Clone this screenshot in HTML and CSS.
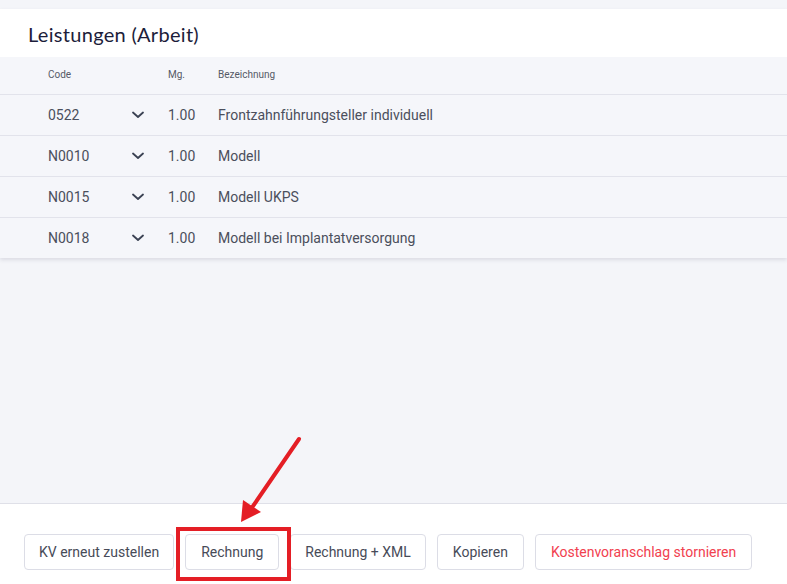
FILE: index.html
```html
<!DOCTYPE html>
<html lang="de">
<head>
<meta charset="utf-8">
<link rel="stylesheet" href="styles.css">
</head>
<body>
<div class="page">
  <section class="card">
    <h2 class="title">Leistungen (Arbeit)</h2>
    <div class="table">
      <div class="row head">
        <span class="c-code">Code</span>
        <span class="c-chev"></span>
        <span class="c-qty">Mg.</span>
        <span class="c-desc">Bezeichnung</span>
      </div>
      <div class="row">
        <span class="c-code">0522</span>
        <span class="c-chev"><svg width="12" height="8" viewBox="0 0 12 8"><path d="M1 1.5 L6 6 L11 1.5" fill="none" stroke="#3b4253" stroke-width="1.8" stroke-linecap="round" stroke-linejoin="round"/></svg></span>
        <span class="c-qty">1.00</span>
        <span class="c-desc">Frontzahnführungsteller individuell</span>
      </div>
      <div class="row">
        <span class="c-code">N0010</span>
        <span class="c-chev"><svg width="12" height="8" viewBox="0 0 12 8"><path d="M1 1.5 L6 6 L11 1.5" fill="none" stroke="#3b4253" stroke-width="1.8" stroke-linecap="round" stroke-linejoin="round"/></svg></span>
        <span class="c-qty">1.00</span>
        <span class="c-desc">Modell</span>
      </div>
      <div class="row">
        <span class="c-code">N0015</span>
        <span class="c-chev"><svg width="12" height="8" viewBox="0 0 12 8"><path d="M1 1.5 L6 6 L11 1.5" fill="none" stroke="#3b4253" stroke-width="1.8" stroke-linecap="round" stroke-linejoin="round"/></svg></span>
        <span class="c-qty">1.00</span>
        <span class="c-desc">Modell UKPS</span>
      </div>
      <div class="row">
        <span class="c-code">N0018</span>
        <span class="c-chev"><svg width="12" height="8" viewBox="0 0 12 8"><path d="M1 1.5 L6 6 L11 1.5" fill="none" stroke="#3b4253" stroke-width="1.8" stroke-linecap="round" stroke-linejoin="round"/></svg></span>
        <span class="c-qty">1.00</span>
        <span class="c-desc">Modell bei Implantatversorgung</span>
      </div>
    </div>
  </section>
  <div class="spacer"></div>
  <footer class="footer">
    <button class="btn btn-kv">KV erneut zustellen</button>
    <button class="btn">Rechnung</button>
    <button class="btn btn-xml">Rechnung + XML</button>
    <button class="btn">Kopieren</button>
    <button class="btn danger">Kostenvoranschlag stornieren</button>
  </footer>
</div>
<div class="mark-box"></div>
<svg class="mark-arrow" width="787" height="584" viewBox="0 0 787 584">
  <line x1="299" y1="439" x2="251" y2="509" stroke="#e41e25" stroke-width="4" stroke-linecap="round"/>
  <polygon points="241,522 243,500 261,512" fill="#e41e25"/>
</svg>
</body>
</html>
```

FILE: styles.css
```css
html, body {
  margin: 0;
  padding: 0;
}
body {
  background: #f4f5f9;
  font-family: Roboto, "Liberation Sans", sans-serif;
  width: 787px;
  height: 584px;
  overflow: hidden;
  position: relative;
}
.page {
  display: flex;
  flex-direction: column;
  height: 584px;
  padding-top: 9px;
  box-sizing: border-box;
}
.card {
  background: #f5f6fa;
  box-shadow: 0 2px 4px rgba(40, 45, 70, 0.12);
}
.title {
  margin: 0;
  background: #fff;
  height: 48px;
  box-sizing: border-box;
  padding: 13px 0 0 28px;
  font-family: Lato, "Noto Sans", sans-serif;
  font-weight: 400;
  font-size: 20px;
  line-height: 24px;
  color: #1c1d3a;
  letter-spacing: 0.3px;
}
.row {
  display: grid;
  grid-template-columns: 84px 36px 50px 1fr;
  align-items: center;
  padding-left: 48px;
  height: 41px;
  box-sizing: border-box;
  border-top: 1px solid #e2e3eb;
  font-size: 14px;
  line-height: 16px;
  color: #4b4f5c;
  padding-bottom: 1px;
}
.row.head {
  height: 37px;
  border-top: none;
  font-size: 10px;
  line-height: 12px;
  color: #555a66;
  padding-bottom: 2px;
}
.c-chev {
  display: flex;
  align-items: center;
}
.c-chev svg {
  display: block;
}
.spacer {
  flex: 1;
}
.footer {
  height: 81px;
  box-sizing: border-box;
  background: #fff;
  border-top: 1px solid #dfe0e8;
  padding: 30px 0 0 24px;
  display: flex;
  align-items: flex-start;
  gap: 11px;
}
.btn {
  height: 36px;
  padding: 0 15px;
  background: #fff;
  border: 1px solid #dcdde6;
  border-radius: 4px;
  font-family: Roboto, "Liberation Sans", sans-serif;
  font-size: 14px;
  color: #474b58;
}
.btn-kv {
  padding: 0 14px;
}
.btn-xml {
  padding: 0 14px;
}
.btn.danger {
  color: #f1414f;
  padding: 0 15px;
}
.mark-box {
  position: absolute;
  left: 176px;
  top: 527px;
  width: 115px;
  height: 54px;
  box-sizing: border-box;
  border: 4px solid #e41e25;
}
.mark-arrow {
  position: absolute;
  left: 0;
  top: 0;
  pointer-events: none;
}
```
